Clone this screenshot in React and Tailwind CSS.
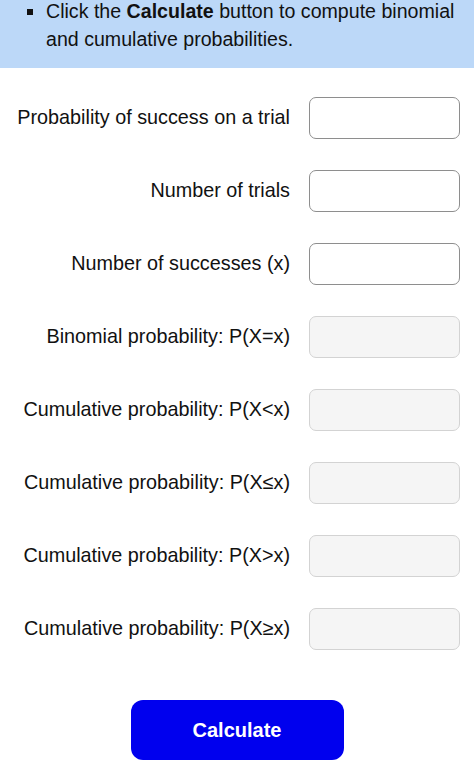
const rows = [
  { label: 'Probability of success on a trial', editable: true },
  { label: 'Number of trials', editable: true },
  { label: 'Number of successes (x)', editable: true },
  { label: 'Binomial probability: P(X=x)', editable: false },
  { label: 'Cumulative probability: P(X<x)', editable: false },
  { label: 'Cumulative probability: P(X≤x)', editable: false },
  { label: 'Cumulative probability: P(X>x)', editable: false },
  { label: 'Cumulative probability: P(X≥x)', editable: false },
]

export default function App() {
  return (
    <div className="w-[474px] h-[777px] overflow-hidden bg-white text-[#111] font-['Liberation_Sans',Arial,sans-serif]">
      {/* Instructions */}
      <div className="h-[68px] overflow-hidden bg-[#bcd8f8] pl-[27px] pr-2">
        <div className="flex -mt-[3px] text-[19.6px] leading-[28px]">
          <span className="w-[19px] shrink-0 pt-[12px]">
            <span className="block w-[6px] h-[6px] bg-[#111]"></span>
          </span>
          <p>
            Click the <b>Calculate</b> button to compute binomial and cumulative probabilities.
          </p>
        </div>
      </div>

      {/* Form */}
      <div className="flex flex-col gap-[31px] pt-[29px] pr-[14px]">
        {rows.map(row => (
          <div key={row.label} className="flex items-center justify-end gap-[19px]">
            <label className="text-[19.8px] text-right whitespace-nowrap">{row.label}</label>
            <input
              type="text"
              disabled={!row.editable}
              className={`w-[151px] h-[42px] shrink-0 rounded-[7px] border px-2 text-[18px] ${
                row.editable ? 'bg-white border-[#8e8e8e]' : 'bg-[#f5f5f5] border-[#d3d3d3]'
              }`}
            />
          </div>
        ))}
      </div>

      <div className="flex justify-center pt-[50px]">
        <button className="w-[213px] h-[60px] rounded-[12px] bg-[#0000ee] text-white font-bold text-[20px]">
          Calculate
        </button>
      </div>
    </div>
  )
}
